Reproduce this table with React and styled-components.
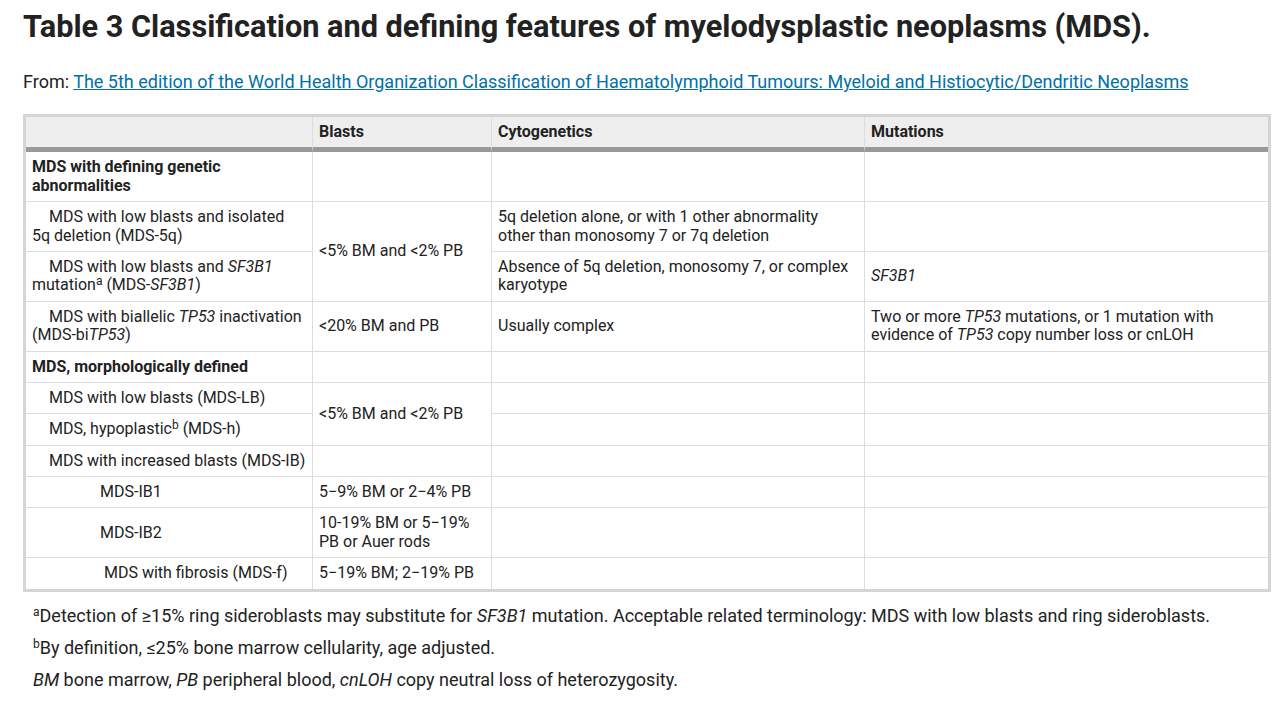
import React from "react";
import styled, { createGlobalStyle } from "styled-components";

const Global = createGlobalStyle`
  html, body { margin: 0; padding: 0; background: #fff; }
  body { font-family: Roboto, "Liberation Sans", Arial, sans-serif; color: #222; }
`;

const Page = styled.div`
  padding: 8px 17px 0 23px;
`;

const Title = styled.h1`
  margin: 0;
  font-size: 30.7px;
  line-height: 38px;
  font-weight: 700;
  color: #222;
`;

const From = styled.p`
  margin: 24px 0 0;
  font-size: 18px;
  line-height: 24px;
  color: #222;
`;

const Link = styled.a`
  color: #0070a8;
  text-decoration: underline;
`;

const Table = styled.table`
  margin-top: 20px;
  width: 100%;
  table-layout: fixed;
  border-collapse: separate;
  border-spacing: 0;
  border: 3px solid #d5d5d5;
  font-size: 16px;
  line-height: 1.15;
`;

const Th = styled.th`
  background: #eeeeee;
  text-align: left;
  font-weight: 700;
  padding: 6px 6px;
  border-right: 1px solid #dddddd;
  border-bottom: 5px solid #999999;
  vertical-align: middle;
  &:last-child { border-right: none; }
`;

const Td = styled.td`
  padding: 6px 6px;
  border-right: 1px solid #dddddd;
  border-bottom: 1px solid #dddddd;
  vertical-align: middle;
  font-weight: ${(p) => (p.$bold ? 700 : 400)};
  text-indent: ${(p) => p.$indent || 0}px;
  &:last-child { border-right: none; }
  tr:last-child > & { border-bottom: none; }
`;

const Sup = styled.sup`
  font-size: 12px;
  line-height: 0;
  vertical-align: 5px;
`;

const Notes = styled.div`
  padding: 8px 0 0 10px;
`;

const Note = styled.p`
  margin: 0;
  font-size: 18px;
  line-height: 32px;
  color: #222;
`;

const NoteSup = styled.sup`
  font-size: 12px;
  line-height: 0;
  vertical-align: 6px;
`;

export default function App() {
  return (
    <>
      <Global />
      <Page>
        <Title>Table 3 Classification and defining features of myelodysplastic neoplasms (MDS).</Title>
        <From>
          From:{" "}
          <Link href="#">
            The 5th edition of the World Health Organization Classification of Haematolymphoid Tumours: Myeloid and Histiocytic/Dendritic Neoplasms
          </Link>
        </From>
        <Table>
          <colgroup>
            <col style={{ width: 287 }} />
            <col style={{ width: 179 }} />
            <col style={{ width: 373 }} />
            <col />
          </colgroup>
          <thead>
            <tr>
              <Th></Th>
              <Th>Blasts</Th>
              <Th>Cytogenetics</Th>
              <Th>Mutations</Th>
            </tr>
          </thead>
          <tbody>
            <tr>
              <Td $bold>MDS with defining genetic abnormalities</Td>
              <Td></Td>
              <Td></Td>
              <Td></Td>
            </tr>
            <tr>
              <Td $indent={17}>MDS with low blasts and isolated<br />5q deletion (MDS-5q)</Td>
              <Td rowSpan={2}>&lt;5% BM and &lt;2% PB</Td>
              <Td>5q deletion alone, or with 1 other abnormality other than monosomy 7 or 7q deletion</Td>
              <Td></Td>
            </tr>
            <tr>
              <Td $indent={17}>
                MDS with low blasts and <i>SF3B1</i> mutation<Sup>a</Sup> (MDS-<i>SF3B1</i>)
              </Td>
              <Td>Absence of 5q deletion, monosomy 7, or complex karyotype</Td>
              <Td><i>SF3B1</i></Td>
            </tr>
            <tr>
              <Td $indent={17}>
                MDS with biallelic <i>TP53</i> inactivation (MDS-bi<i>TP53</i>)
              </Td>
              <Td>&lt;20% BM and PB</Td>
              <Td>Usually complex</Td>
              <Td>
                Two or more <i>TP53</i> mutations, or 1 mutation with evidence of <i>TP53</i> copy number loss or cnLOH
              </Td>
            </tr>
            <tr>
              <Td $bold>MDS, morphologically defined</Td>
              <Td></Td>
              <Td></Td>
              <Td></Td>
            </tr>
            <tr>
              <Td $indent={17}>MDS with low blasts (MDS-LB)</Td>
              <Td rowSpan={2}>&lt;5% BM and &lt;2% PB</Td>
              <Td></Td>
              <Td></Td>
            </tr>
            <tr>
              <Td $indent={17}>
                MDS, hypoplastic<Sup>b</Sup> (MDS-h)
              </Td>
              <Td></Td>
              <Td></Td>
            </tr>
            <tr>
              <Td $indent={17}>MDS with increased blasts (MDS-IB)</Td>
              <Td></Td>
              <Td></Td>
              <Td></Td>
            </tr>
            <tr>
              <Td $indent={68}>MDS-IB1</Td>
              <Td>5−9% BM or 2−4% PB</Td>
              <Td></Td>
              <Td></Td>
            </tr>
            <tr>
              <Td $indent={68}>MDS-IB2</Td>
              <Td>10-19% BM or 5−19% PB or Auer rods</Td>
              <Td></Td>
              <Td></Td>
            </tr>
            <tr>
              <Td $indent={72}>MDS with fibrosis (MDS-f)</Td>
              <Td>5−19% BM; 2−19% PB</Td>
              <Td></Td>
              <Td></Td>
            </tr>
          </tbody>
        </Table>
        <Notes>
          <Note>
            <NoteSup>a</NoteSup>Detection of ≥15% ring sideroblasts may substitute for <i>SF3B1</i> mutation. Acceptable related terminology: MDS with low blasts and ring sideroblasts.
          </Note>
          <Note>
            <NoteSup>b</NoteSup>By definition, ≤25% bone marrow cellularity, age adjusted.
          </Note>
          <Note>
            <i>BM</i> bone marrow, <i>PB</i> peripheral blood, <i>cnLOH</i> copy neutral loss of heterozygosity.
          </Note>
        </Notes>
      </Page>
    </>
  );
}
